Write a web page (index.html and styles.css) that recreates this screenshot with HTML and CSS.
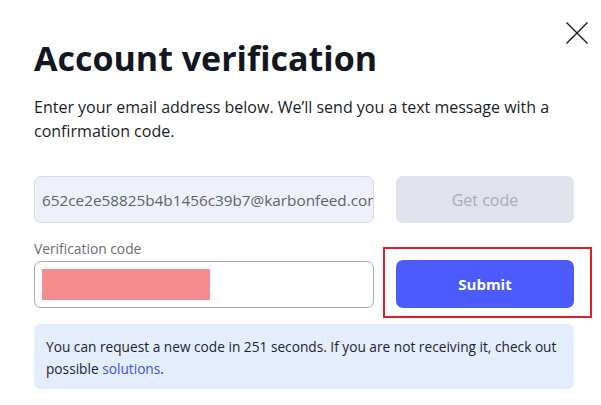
FILE: index.html
```html
<!DOCTYPE html>
<html lang="en">
<head>
<meta charset="utf-8">
<title>Account verification</title>
<link rel="stylesheet" href="styles.css">
</head>
<body>
<div class="dialog">
  <button class="close" aria-label="Close">
    <svg width="22" height="22" viewBox="0 0 22 22"><path d="M0.5 0.5L21.5 21.5M21.5 0.5L0.5 21.5" stroke="#1b1d24" stroke-width="1.4" fill="none"/></svg>
  </button>
  <h1 class="title">Account verification</h1>
  <p class="lead">Enter your email address below. We’ll send you a text message with a confirmation code.</p>
  <div class="row row-email">
    <div class="field field-email">652ce2e58825b4b1456c39b7@karbonfeed.com</div>
    <button class="btn btn-disabled">Get code</button>
  </div>
  <div class="row row-code">
    <div class="col-code">
      <label class="label">Verification code</label>
      <div class="field field-code"><span class="redact"></span></div>
    </div>
    <div class="submit-wrap">
      <button class="btn btn-primary">Submit</button>
      <span class="highlight"></span>
    </div>
  </div>
  <div class="info">You can request a new code in 251 seconds. If you are not receiving it, check out possible <a href="#">solutions</a>.</div>
</div>
</body>
</html>
```
FILE: styles.css
```css
* { box-sizing: border-box; }
html, body { margin: 0; padding: 0; background: #fff; }
body { font-family: "Open Sans", "DejaVu Sans", sans-serif; color: #131722; width: 601px; height: 405px; overflow: hidden; }
.dialog { position: relative; padding: 34px 27px 0 34px; }
.close { position: absolute; top: 22px; right: 13px; width: 22px; height: 22px; padding: 0; border: 0; background: none; }
.close svg { display: block; }
.title { margin: 0; font-size: 34px; font-weight: 700; line-height: 48px; }
.lead { margin: 13px 0 0; font-size: 16px; line-height: 24px; color: #1a1d26; width: 540px; }
.row { display: flex; gap: 22px; width: 540px; }
.row-email { margin-top: 33px; }
.field { width: 340px; height: 47px; border-radius: 7px; font-size: 16px; display: flex; align-items: center; }
.field-email { background: #eef1f9; border: 1px solid #d6d9e2; color: #5e6370; padding-left: 7px; overflow: hidden; white-space: nowrap; font-size: 15.3px; }
.btn { width: 178px; height: 47px; border: 0; border-radius: 7px; font-family: inherit; font-size: 16px; }
.btn-disabled { background: #e0e3eb; color: #a9adb6; }
.row-code { margin-top: 18px; align-items: flex-end; }
.col-code { display: flex; flex-direction: column; }
.label { font-size: 13.8px; color: #6a6d78; line-height: 16px; margin-bottom: 4px; }
.field-code { border: 1px solid #a7a9b3; padding-left: 7px; }
.redact { display: block; width: 168px; height: 31px; background: #f48c8f; }
.submit-wrap { position: relative; }
.btn-primary { display: block; background: #4c5bfe; color: #fff; font-weight: 700; font-size: 15px; height: 48px; }
.highlight { position: absolute; left: -13px; top: -13px; right: -18px; bottom: -10px; border: 2px solid #e41e27; pointer-events: none; }
.info { margin-top: 16px; width: 540px; height: 65px; background: #e4edfd; border-radius: 6px; padding: 12px 12px 0; font-size: 13.7px; line-height: 22px; color: #1f2330; }
.info a { color: #3f51e8; text-decoration: none; }
```
